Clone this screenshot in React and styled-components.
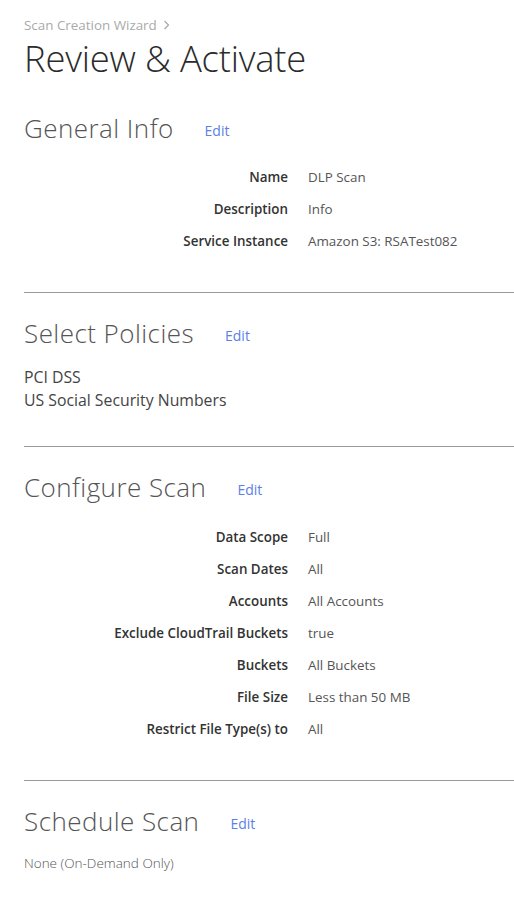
import React from "react";
import styled, { createGlobalStyle } from "styled-components";

const Global = createGlobalStyle`
  html, body { margin: 0; padding: 0; background: #fff; }
  body { font-family: "Open Sans", "Noto Sans", sans-serif; }
`;

const Page = styled.div`
  padding: 14px 0 0 24px;
  box-sizing: border-box;
  width: 514px;
`;

const Crumb = styled.div`
  font-size: 13.4px;
  line-height: 22px;
  color: #aaa;
  display: flex;
  align-items: center;
  gap: 6px;
`;

const Title = styled.h1`
  margin: 0;
  font-weight: 300;
  font-size: 36.4px;
  line-height: 44px;
  color: #2b2b2b;
  letter-spacing: -0.2px;
`;

const Section = styled.section`
  padding: ${(p) => p.$top}px 0 ${(p) => p.$bottom}px;
  border-bottom: ${(p) => (p.$last ? "none" : "1px solid #999")};
`;

const Head = styled.div`
  display: flex;
  align-items: flex-end;
  gap: 31px;
  height: 40px;
`;

const SectionTitle = styled.h2`
  margin: 0;
  font-weight: 300;
  font-size: 26px;
  letter-spacing: 0.45px;
  line-height: 40px;
  color: #555;
`;

const Edit = styled.a`
  font-size: 14px;
  line-height: 19px;
  margin-bottom: 8px;
  color: #5b80e6;
  text-decoration: none;
  cursor: pointer;
`;

const Grid = styled.dl`
  display: grid;
  grid-template-columns: 264px auto;
  column-gap: 20px;
  row-gap: 0;
  margin: ${(p) => p.$mt}px 0 0;
  font-size: 13.4px;
`;

const Label = styled.dt`
  text-align: right;
  font-weight: 600;
  color: #333;
  line-height: 32px;
`;

const Value = styled.dd`
  margin: 0;
  color: #555;
  line-height: 32px;
`;

const List = styled.div`
  margin-top: ${(p) => p.$mt}px;
  font-size: 15.8px;
  line-height: 23px;
  color: #444;
`;

const Note = styled.div`
  margin-top: 13px;
  font-size: 13.5px;
  font-weight: 300;
  color: #555;
`;

const Chevron = () => (
  <svg width="7" height="10" viewBox="0 0 7 10" fill="none">
    <path d="M1.5 1l4 4-4 4" stroke="#aaa" strokeWidth="1.3" />
  </svg>
);

const Rows = ({ data, mt }) => (
  <Grid $mt={mt}>
    {data.map(([k, v]) => (
      <React.Fragment key={k}>
        <Label>{k}</Label>
        <Value>{v}</Value>
      </React.Fragment>
    ))}
  </Grid>
);

export default function App() {
  return (
    <Page>
      <Global />
      <Crumb>
        Scan Creation Wizard <Chevron />
      </Crumb>
      <Title>Review &amp; Activate</Title>
      <Section $top={28} $bottom={35}>
        <Head>
          <SectionTitle>General Info</SectionTitle>
          <Edit>Edit</Edit>
        </Head>
        <Rows
          mt={13}
          data={[
            ["Name", "DLP Scan"],
            ["Description", "Info"],
            ["Service Instance", "Amazon S3: RSATest082"],
          ]}
        />
      </Section>
      <Section $top={20} $bottom={34}>
        <Head>
          <SectionTitle>Select Policies</SectionTitle>
          <Edit>Edit</Edit>
        </Head>
        <List $mt={13}>
          <div>PCI DSS</div>
          <div>US Social Security Numbers</div>
        </List>
      </Section>
      <Section $top={20} $bottom={35}>
        <Head>
          <SectionTitle>Configure Scan</SectionTitle>
          <Edit>Edit</Edit>
        </Head>
        <Rows
          mt={14}
          data={[
            ["Data Scope", "Full"],
            ["Scan Dates", "All"],
            ["Accounts", "All Accounts"],
            ["Exclude CloudTrail Buckets", "true"],
            ["Buckets", "All Buckets"],
            ["File Size", "Less than 50 MB"],
            ["Restrict File Type(s) to", "All"],
          ]}
        />
      </Section>
      <Section $top={20} $bottom={20} $last>
        <Head>
          <SectionTitle>Schedule Scan</SectionTitle>
          <Edit>Edit</Edit>
        </Head>
        <Note>None (On-Demand Only)</Note>
      </Section>
    </Page>
  );
}
